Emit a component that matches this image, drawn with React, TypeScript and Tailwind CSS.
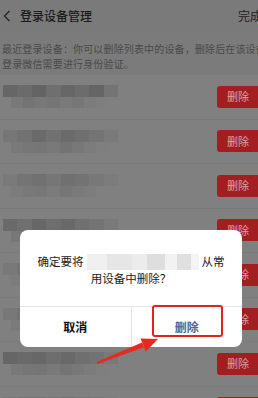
import React from "react";

const rowShades: string[][][] = [
  [
    ["bg-[#666666]", "bg-[#6b6b6b]", "bg-[#646464]", "bg-[#6f6f6f]", "bg-[#676767]", "bg-[#6c6c6c]", "bg-[#656565]", "bg-[#747474]"],
    ["bg-[#797979]", "bg-[#747474]", "bg-[#787878]", "bg-[#757575]", "bg-[#7a7a7a]", "bg-[#777777]", "bg-[#7c7c7c]", "bg-[#7f7f7f]"],
  ],
  [
    ["bg-[#777777]", "bg-[#727272]", "bg-[#6a6a6a]", "bg-[#717171]", "bg-[#6b6b6b]", "bg-[#6f6f6f]", "bg-[#747474]", "bg-[#7a7a7a]"],
    ["bg-[#7a7a7a]", "bg-[#777777]", "bg-[#767676]", "bg-[#797979]", "bg-[#737373]", "bg-[#787878]", "bg-[#7c7c7c]", "bg-[#7f7f7f]"],
  ],
  [
    ["bg-[#7a7a7a]", "bg-[#747474]", "bg-[#717171]", "bg-[#767676]", "bg-[#707070]", "bg-[#737373]", "bg-[#787878]", "bg-[#7c7c7c]"],
    ["bg-[#7c7c7c]", "bg-[#797979]", "bg-[#777777]", "bg-[#7b7b7b]", "bg-[#767676]", "bg-[#7a7a7a]", "bg-[#7d7d7d]", "bg-[#808080]"],
  ],
  [
    ["bg-[#6a6a6a]", "bg-[#6f6f6f]", "bg-[#676767]", "bg-[#6e6e6e]", "bg-[#696969]", "bg-[#707070]", "bg-[#747474]", "bg-[#7a7a7a]"],
    ["bg-[#787878]", "bg-[#757575]", "bg-[#777777]", "bg-[#797979]", "bg-[#767676]", "bg-[#787878]", "bg-[#7c7c7c]", "bg-[#7f7f7f]"],
  ],
  [
    ["bg-[#797979]", "bg-[#747474]", "bg-[#727272]", "bg-[#777777]", "bg-[#717171]", "bg-[#757575]", "bg-[#797979]", "bg-[#7d7d7d]"],
    ["bg-[#7c7c7c]", "bg-[#797979]", "bg-[#787878]", "bg-[#7b7b7b]", "bg-[#777777]", "bg-[#7a7a7a]", "bg-[#7d7d7d]", "bg-[#808080]"],
  ],
  [
    ["bg-[#787878]", "bg-[#737373]", "bg-[#717171]", "bg-[#767676]", "bg-[#707070]", "bg-[#747474]", "bg-[#787878]", "bg-[#7d7d7d]"],
    ["bg-[#7b7b7b]", "bg-[#797979]", "bg-[#777777]", "bg-[#7a7a7a]", "bg-[#767676]", "bg-[#7a7a7a]", "bg-[#7d7d7d]", "bg-[#808080]"],
  ],
  [
    ["bg-[#666666]", "bg-[#6a6a6a]", "bg-[#676767]", "bg-[#6e6e6e]", "bg-[#696969]", "bg-[#6f6f6f]", "bg-[#737373]", "bg-[#797979]"],
    ["bg-[#797979]", "bg-[#767676]", "bg-[#757575]", "bg-[#797979]", "bg-[#747474]", "bg-[#787878]", "bg-[#7c7c7c]", "bg-[#7f7f7f]"],
  ],
  [
    ["bg-[#797979]", "bg-[#747474]", "bg-[#727272]", "bg-[#777777]", "bg-[#717171]", "bg-[#757575]", "bg-[#797979]", "bg-[#7d7d7d]"],
    ["bg-[#7c7c7c]", "bg-[#797979]", "bg-[#787878]", "bg-[#7b7b7b]", "bg-[#777777]", "bg-[#7a7a7a]", "bg-[#7d7d7d]", "bg-[#808080]"],
  ],
];

function Row({ shades }: { shades: string[][] }) {
  return (
    <div className="flex h-[44.5px] items-center justify-between border-b border-[#7a7a7a]">
      <div className="ml-[3px] flex w-[115px] flex-col">
        <div className="flex h-[12px]">
          {shades[0].map((c, i) => (
            <div key={i} className={`h-full flex-1 ${c}`} />
          ))}
        </div>
        <div className="ml-[8px] flex h-[11px] w-[97px]">
          {shades[1].map((c, i) => (
            <div key={i} className={`h-full flex-1 ${c}`} />
          ))}
        </div>
      </div>
      <div className="mr-[-8px] flex h-[22px] w-[49px] items-center rounded-[3px] bg-[#a21e21] pl-[10px] text-[11px] leading-none text-[#d8a3a3]">
        删除
      </div>
    </div>
  );
}

export default function App() {
  const font = { fontFamily: '"Noto Sans CJK SC", "Noto Sans", sans-serif' };
  return (
    <div
      className="relative h-[398px] w-[258px] overflow-hidden bg-[#7c7c7c]"
      style={font}
    >
      {/* header */}
      <div className="flex h-[31px] items-center justify-between bg-[#7a7a7a]">
        <div className="flex items-center">
          <svg width="8" height="12" viewBox="0 0 8 12" className="ml-[3px]">
            <path d="M6.5 1 L1.5 6 L6.5 11" fill="none" stroke="#222" strokeWidth="1.3" />
          </svg>
          <span className="ml-[9px] text-[12px] font-medium leading-none text-[#1c1c1c]">
            登录设备管理
          </span>
        </div>
        <span className="mr-[-4px] whitespace-nowrap text-[12px] leading-none text-[#1c1c1c]">
          完成
        </span>
      </div>
      {/* description */}
      <div className="h-[44px] bg-[#7b7b7b] pl-[2px] pt-[10px] text-[10px] leading-[15px] tracking-[0.15px] text-[#4a4a4a]">
        <div className="whitespace-nowrap">最近登录设备：你可以删除列表中的设备，删除后在该设备</div>
        <div className="whitespace-nowrap">登录微信需要进行身份验证。</div>
      </div>
      {/* list */}
      <div className="flex flex-col bg-[#808080]">
        {rowShades.map((s, i) => (
          <Row key={i} shades={s} />
        ))}
      </div>

      {/* dialog */}
      <div className="absolute left-[20px] top-[230px] flex h-[117px] w-[222px] flex-col rounded-[8px] bg-white">
        <div className="flex h-[76px] flex-col items-center pt-[23px] text-[11.5px] leading-[17px] text-[#1a1a1a]">
          <div className="flex items-center">
            <span>确定要将</span>
            <div className="mx-[3px] flex h-[16px] w-[112px]">
              <div className="h-full w-[20px] bg-[#f0f0f0]" />
              <div className="h-full w-[25px] bg-[#e6e6e6]" />
              <div className="h-full w-[15px] bg-[#ececec]" />
              <div className="h-full w-[18px] bg-[#dedede]" />
              <div className="h-full w-[12px] bg-[#f2f2f2]" />
              <div className="h-full w-[14px] bg-[#e0e0e0]" />
              <div className="h-full w-[8px] bg-[#f4f4f4]" />
            </div>
            <span>从常</span>
          </div>
          <div>用设备中删除？</div>
        </div>
        <div className="flex flex-1 border-t border-[#e6e6e6]">
          <div className="flex flex-1 items-center justify-center border-r border-[#e6e6e6] text-[12px] font-bold text-[#111]">
            取消
          </div>
          <div className="flex flex-1 items-center justify-center text-[12px] font-semibold text-[#55668f]">
            删除
          </div>
        </div>
      </div>

      {/* red highlight */}
      <div className="absolute left-[152px] top-[305px] h-[32px] w-[71px] rounded-[3px] border-[2.5px] border-[#e3221d]" />

      {/* arrow */}
      <svg className="absolute left-0 top-0" width="258" height="398" viewBox="0 0 258 398">
        <polygon
          points="96.6,362 97.4,364 144.2,347.2 142,342.6"
          fill="#e8291f"
        />
        <polygon points="158,339 140.5,338.4 145.7,351.4" fill="#e8291f" />
      </svg>
    </div>
  );
}
